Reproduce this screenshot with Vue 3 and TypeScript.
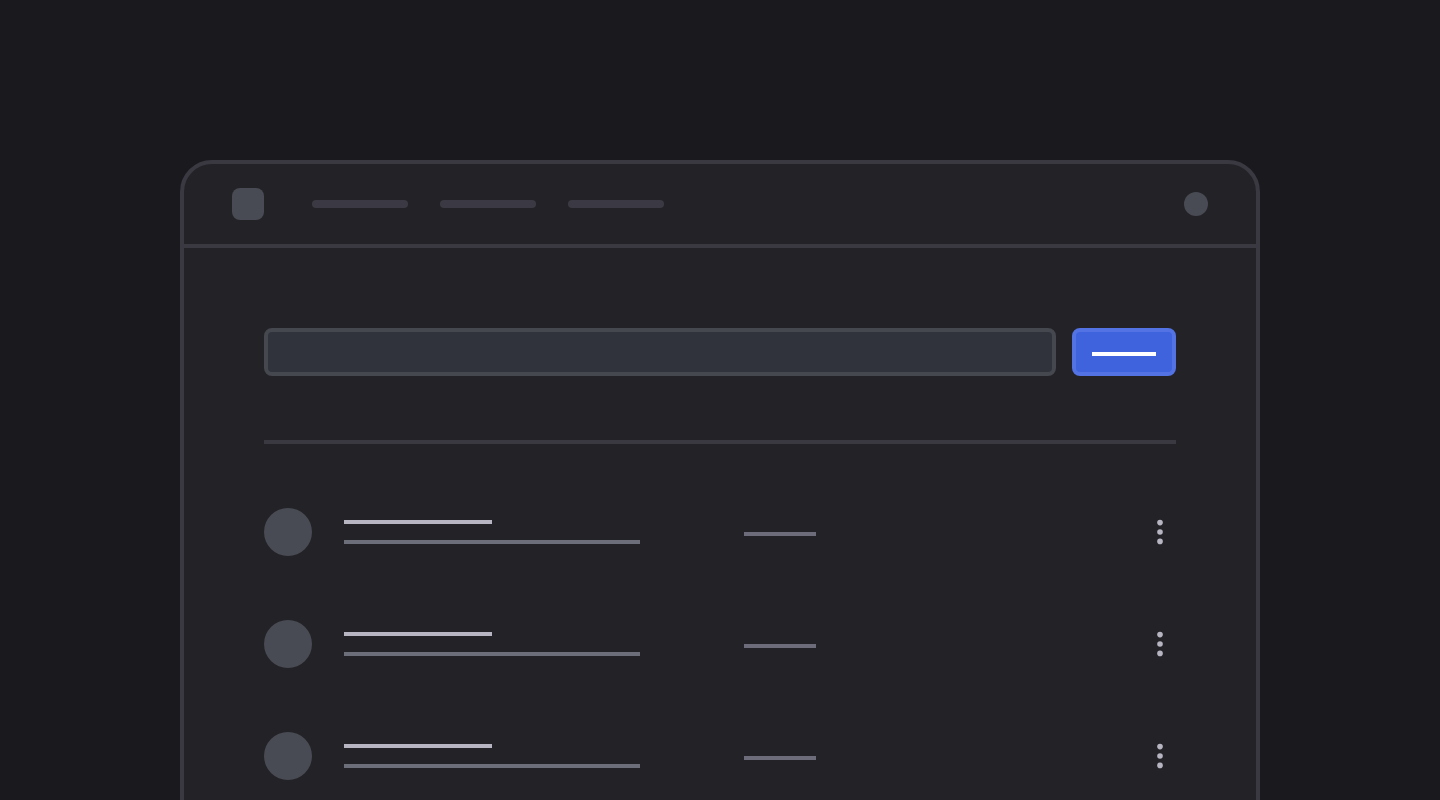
<script setup lang="ts">
import { ref } from 'vue'

interface Row {
  id: number
}

const navItems: number[] = [1, 2, 3]
const rows: Row[] = [{ id: 1 }, { id: 2 }, { id: 3 }]
const query = ref<string>('')
</script>

<template>
  <div class="page">
    <div class="window">
      <header class="header">
        <a class="logo" href="#" aria-label="Home"></a>
        <nav class="nav" aria-label="Main">
          <a v-for="item in navItems" :key="item" class="nav-link" href="#" :aria-label="`Section ${item}`"></a>
        </nav>
        <button class="account" type="button" aria-label="Account"></button>
      </header>
      <main class="content">
        <form class="search" @submit.prevent>
          <input v-model="query" class="field" type="text" aria-label="Search" />
          <button class="submit" type="submit" aria-label="Submit"><span class="submit-line"></span></button>
        </form>
        <ul class="list">
          <li v-for="row in rows" :key="row.id" class="row">
            <span class="avatar"></span>
            <div class="text">
              <span class="line title"></span>
              <span class="line subtitle"></span>
            </div>
            <span class="line meta"></span>
            <button class="more" type="button" :aria-label="`Actions for row ${row.id}`">
              <svg width="32" height="32" viewBox="0 0 32 32" fill="currentColor" aria-hidden="true">
                <circle cx="16" cy="6.6" r="2.8" />
                <circle cx="16" cy="16" r="2.8" />
                <circle cx="16" cy="25.4" r="2.8" />
              </svg>
            </button>
          </li>
        </ul>
      </main>
    </div>
  </div>
</template>

<style>
body {
  margin: 0;
  background: #1a191e;
}
</style>

<style scoped>
.page,
.page * {
  box-sizing: border-box;
}

.page {
  display: flex;
  justify-content: center;
  height: 100vh;
  padding-top: 160px;
  overflow: hidden;
  background: #1a191e;
  font-family: Inter, sans-serif;
}

.window {
  flex: 0 0 75%;
  min-height: 100vh;
  border: 4px solid #3a3941;
  border-radius: 32px;
  background: #232227;
}

button {
  padding: 0;
  border: 0;
  background: none;
}

.header {
  display: flex;
  align-items: center;
  gap: 48px;
  padding: 24px 48px;
  border-bottom: 4px solid #3a3941;
}

.logo {
  width: 32px;
  height: 32px;
  border-radius: 8px;
  background: #484b54;
}

.nav {
  display: flex;
  gap: 32px;
}

.nav-link {
  width: 96px;
  height: 8px;
  border-radius: 4px;
  background: #3b3943;
}

.account {
  width: 24px;
  height: 24px;
  margin-left: auto;
  border-radius: 50%;
  background: #484b54;
}

.content {
  padding: 80px;
}

.search {
  display: flex;
  gap: 16px;
}

.field {
  flex: 1;
  min-width: 0;
  height: 48px;
  padding: 0 12px;
  border: 4px solid #464850;
  border-radius: 8px;
  background: #30333c;
  color: #b7b5c1;
  font: inherit;
}

.submit {
  padding: 4px 16px 0;
  border: 4px solid #5373e4;
  border-radius: 8px;
  background: #3f63dd;
}

.submit-line {
  display: block;
  width: 64px;
  height: 4px;
  background: #ffffff;
}

.list {
  display: flex;
  flex-direction: column;
  gap: 64px;
  margin: 64px 0 0;
  padding: 64px 0 0;
  border-top: 4px solid #3a3941;
  list-style: none;
}

.row {
  display: grid;
  grid-template-columns: 48px 368px 1fr 32px;
  column-gap: 32px;
  align-items: center;
}

.avatar {
  width: 48px;
  height: 48px;
  border-radius: 50%;
  background: #484b54;
}

.text {
  display: flex;
  flex-direction: column;
  gap: 16px;
}

.line {
  height: 4px;
}

.title {
  width: 148px;
  background: #b7b5c1;
}

.subtitle {
  width: 296px;
  background: #6c6e79;
}

.meta {
  width: 72px;
  margin-top: 4px;
  background: #6d6c7a;
}

.more {
  display: flex;
  color: #b7b5c1;
}
</style>
